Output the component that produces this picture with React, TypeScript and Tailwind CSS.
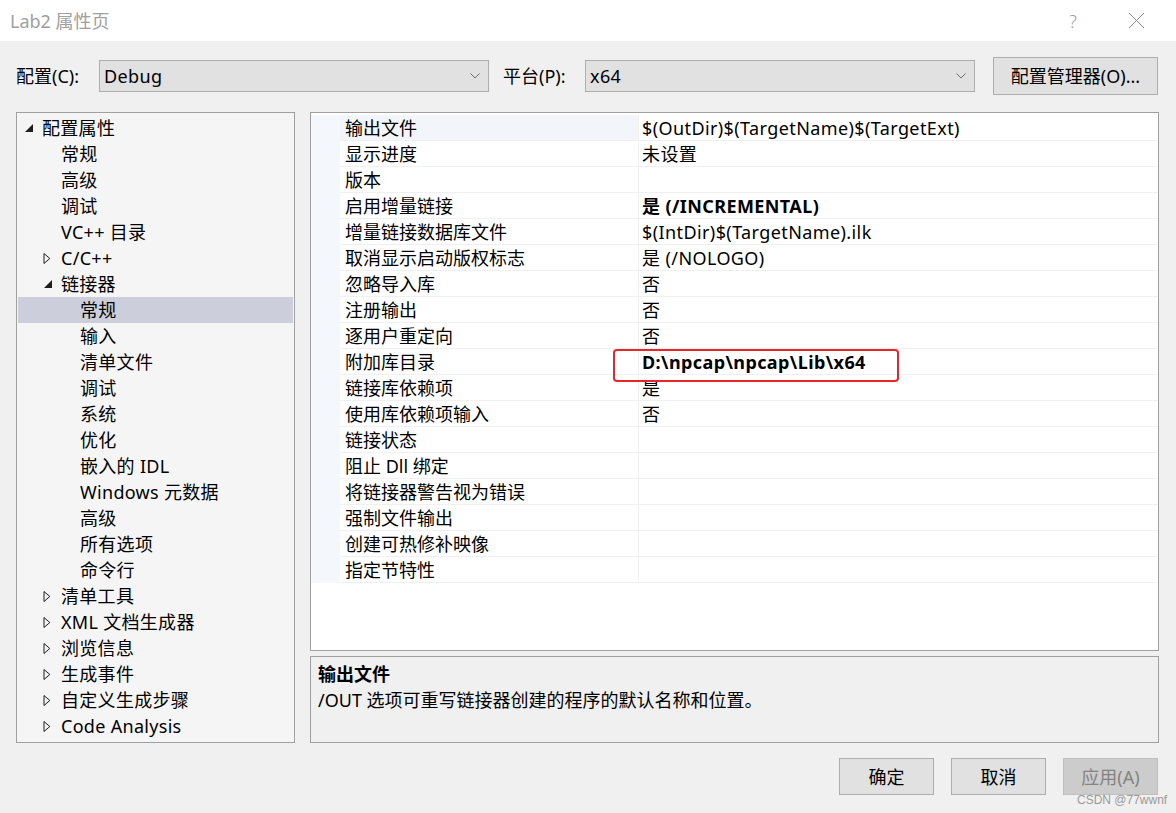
import React from "react";

const FONT = { fontFamily: '"Noto Sans", "Noto Sans CJK SC", sans-serif' };

type TreeItem = { text: string; level: 0 | 1 | 2; icon?: "open" | "closed"; selected?: boolean };

const tree: TreeItem[] = [
  { text: "配置属性", level: 0, icon: "open" },
  { text: "常规", level: 1 },
  { text: "高级", level: 1 },
  { text: "调试", level: 1 },
  { text: "VC++ 目录", level: 1 },
  { text: "C/C++", level: 1, icon: "closed" },
  { text: "链接器", level: 1, icon: "open" },
  { text: "常规", level: 2, selected: true },
  { text: "输入", level: 2 },
  { text: "清单文件", level: 2 },
  { text: "调试", level: 2 },
  { text: "系统", level: 2 },
  { text: "优化", level: 2 },
  { text: "嵌入的 IDL", level: 2 },
  { text: "Windows 元数据", level: 2 },
  { text: "高级", level: 2 },
  { text: "所有选项", level: 2 },
  { text: "命令行", level: 2 },
  { text: "清单工具", level: 1, icon: "closed" },
  { text: "XML 文档生成器", level: 1, icon: "closed" },
  { text: "浏览信息", level: 1, icon: "closed" },
  { text: "生成事件", level: 1, icon: "closed" },
  { text: "自定义生成步骤", level: 1, icon: "closed" },
  { text: "Code Analysis", level: 1, icon: "closed" },
];

const levelPad: Record<number, string> = {
  0: "pl-[6px]",
  1: "pl-[25px]",
  2: "pl-[44px]",
};

type Prop = { name: string; value?: string; bold?: boolean };
const props: Prop[] = [
  { name: "输出文件", value: "$(OutDir)$(TargetName)$(TargetExt)" },
  { name: "显示进度", value: "未设置" },
  { name: "版本" },
  { name: "启用增量链接", value: "是 (/INCREMENTAL)", bold: true },
  { name: "增量链接数据库文件", value: "$(IntDir)$(TargetName).ilk" },
  { name: "取消显示启动版权标志", value: "是 (/NOLOGO)" },
  { name: "忽略导入库", value: "否" },
  { name: "注册输出", value: "否" },
  { name: "逐用户重定向", value: "否" },
  { name: "附加库目录", value: "D:\\npcap\\npcap\\Lib\\x64", bold: true },
  { name: "链接库依赖项", value: "是" },
  { name: "使用库依赖项输入", value: "否" },
  { name: "链接状态" },
  { name: "阻止 Dll 绑定" },
  { name: "将链接器警告视为错误" },
  { name: "强制文件输出" },
  { name: "创建可热修补映像" },
  { name: "指定节特性" },
];

function Chevron() {
  return (
    <svg width="10" height="6" viewBox="0 0 10 6" className="shrink-0">
      <path d="M0.5 0.5 L5 5 L9.5 0.5" fill="none" stroke="#6d6d6d" strokeWidth="1" />
    </svg>
  );
}

function TriOpen() {
  return (
    <svg width="10" height="10" viewBox="0 0 10 10">
      <path d="M9 1 L9 9 L1 9 Z" fill="#1e1e1e" />
    </svg>
  );
}

function TriClosed() {
  return (
    <svg width="8" height="11" viewBox="0 0 8 11">
      <path d="M1 0.5 L6.8 5.5 L1 10.5 Z" fill="none" stroke="#1e1e1e" strokeWidth="1" />
    </svg>
  );
}

function Combo({ value }: { value: string }) {
  return (
    <div className="w-[390px] h-[32px] bg-[#e1e1e1] border border-[#adadad] flex items-center justify-between pl-[4px] pr-[8px]">
      <span className="text-[18px] leading-[24px] text-black tracking-[0.4px]">{value}</span>
      <Chevron />
    </div>
  );
}

export default function App() {
  return (
    <div className="w-[1176px] h-[813px] bg-[#f0f0f0] flex flex-col relative overflow-hidden text-black" style={FONT}>
      {/* title bar */}
      <div className="h-[41px] bg-white flex items-center justify-between pl-[10px] shrink-0">
        <span className="text-[18px] leading-[24px] text-[#a0a0a0]">Lab2 属性页</span>
        <div className="flex items-center h-full">
          <span className="w-[46px] text-center text-[18px] leading-[24px] text-[#a0a0a0] font-light">?</span>
          <div className="w-[80px] flex justify-center">
            <svg width="17" height="17" viewBox="0 0 17 17">
              <path d="M1 1 L16 16 M16 1 L1 16" stroke="#8a8a8a" strokeWidth="1" fill="none" />
            </svg>
          </div>
        </div>
      </div>

      {/* config row */}
      <div className="flex items-center pl-[16px] pr-[18px] pt-[16px] h-[54px] shrink-0">
        <span className="text-[18px] leading-[24px] w-[83px]">配置(C):</span>
        <Combo value="Debug" />
        <span className="text-[18px] leading-[24px] ml-[14px] w-[82px]">平台(P):</span>
        <Combo value="x64" />
        <div className="ml-auto w-[165px] h-[38px] bg-[#e1e1e1] border border-[#adadad] flex items-center justify-center text-[18px] leading-[24px]">
          配置管理器(O)...
        </div>
      </div>

      {/* main area */}
      <div className="flex pl-[16px] pr-[17px] mt-[17px] gap-[15px] h-[631px] shrink-0">
        {/* tree */}
        <div className="w-[279px] h-full border border-[#a0a0a0] bg-[#f5f5f5] px-[1px] pt-[2px]">
          {tree.map((t, i) => (
            <div
              key={i}
              className={`h-[26px] flex items-center ${levelPad[t.level]} ${t.selected ? "bg-[#cccedb]" : ""}`}
            >
              <div className="w-[18px] h-full flex items-center justify-start">
                {t.icon === "open" && <TriOpen />}
                {t.icon === "closed" && <TriClosed />}
              </div>
              <span className="text-[18px] leading-[24px] whitespace-nowrap tracking-[0.3px]">{t.text}</span>
            </div>
          ))}
        </div>

        {/* right column */}
        <div className="flex-1 flex flex-col gap-[5px] h-full">
          <div className="h-[539px] border border-[#a0a0a0] bg-white pt-[2px] relative">
            {props.map((p, i) => (
              <div key={i} className="flex h-[26px]">
                <div className="w-[29px] bg-[#f4f7fc]" />
                <div
                  className={`w-[298px] pl-[5px] flex items-center border-b border-[#f0f0f0] ${i === 0 ? "bg-[#f2f5fa]" : ""}`}
                >
                  <span className="text-[18px] leading-[24px] whitespace-nowrap">{p.name}</span>
                </div>
                <div className="w-[1px] bg-[#f0f0f0]" />
                <div className="flex-1 pl-[3px] flex items-center border-b border-[#f0f0f0]">
                  <span className={`text-[18px] leading-[24px] whitespace-nowrap tracking-[0.4px] ${p.bold ? "font-bold" : ""}`}>
                    {p.value ?? ""}
                  </span>
                </div>
              </div>
            ))}
            <div className="absolute left-[302px] top-[236px] w-[286px] h-[33px] border-2 border-[#e8262a] rounded-[4px]" />
          </div>
          <div className="flex-1 border border-[#a0a0a0] bg-[#f0f0f0] pl-[7px] pt-[4px]">
            <div className="text-[18px] leading-[26px] font-bold">输出文件</div>
            <div className="text-[18px] leading-[26px]">/OUT 选项可重写链接器创建的程序的默认名称和位置。</div>
          </div>
        </div>
      </div>

      {/* buttons */}
      <div className="flex justify-end gap-[17px] pr-[18px] mt-[15px]">
        <div className="w-[95px] h-[37px] bg-[#e1e1e1] border border-[#adadad] flex items-center justify-center text-[18px] leading-[24px]">
          确定
        </div>
        <div className="w-[95px] h-[37px] bg-[#e1e1e1] border border-[#adadad] flex items-center justify-center text-[18px] leading-[24px]">
          取消
        </div>
        <div className="w-[95px] h-[37px] bg-[#cccccc] border border-[#bfbfbf] flex items-center justify-center text-[18px] leading-[24px] text-[#838383]">
          应用(A)
        </div>
      </div>

      <div
        className="absolute left-[1077px] top-[793px] text-[12px] leading-[14px] text-[#9a9a9a]"
        style={{ fontFamily: '"Liberation Sans", sans-serif' }}
      >
        CSDN @77wwnf
      </div>
    </div>
  );
}
